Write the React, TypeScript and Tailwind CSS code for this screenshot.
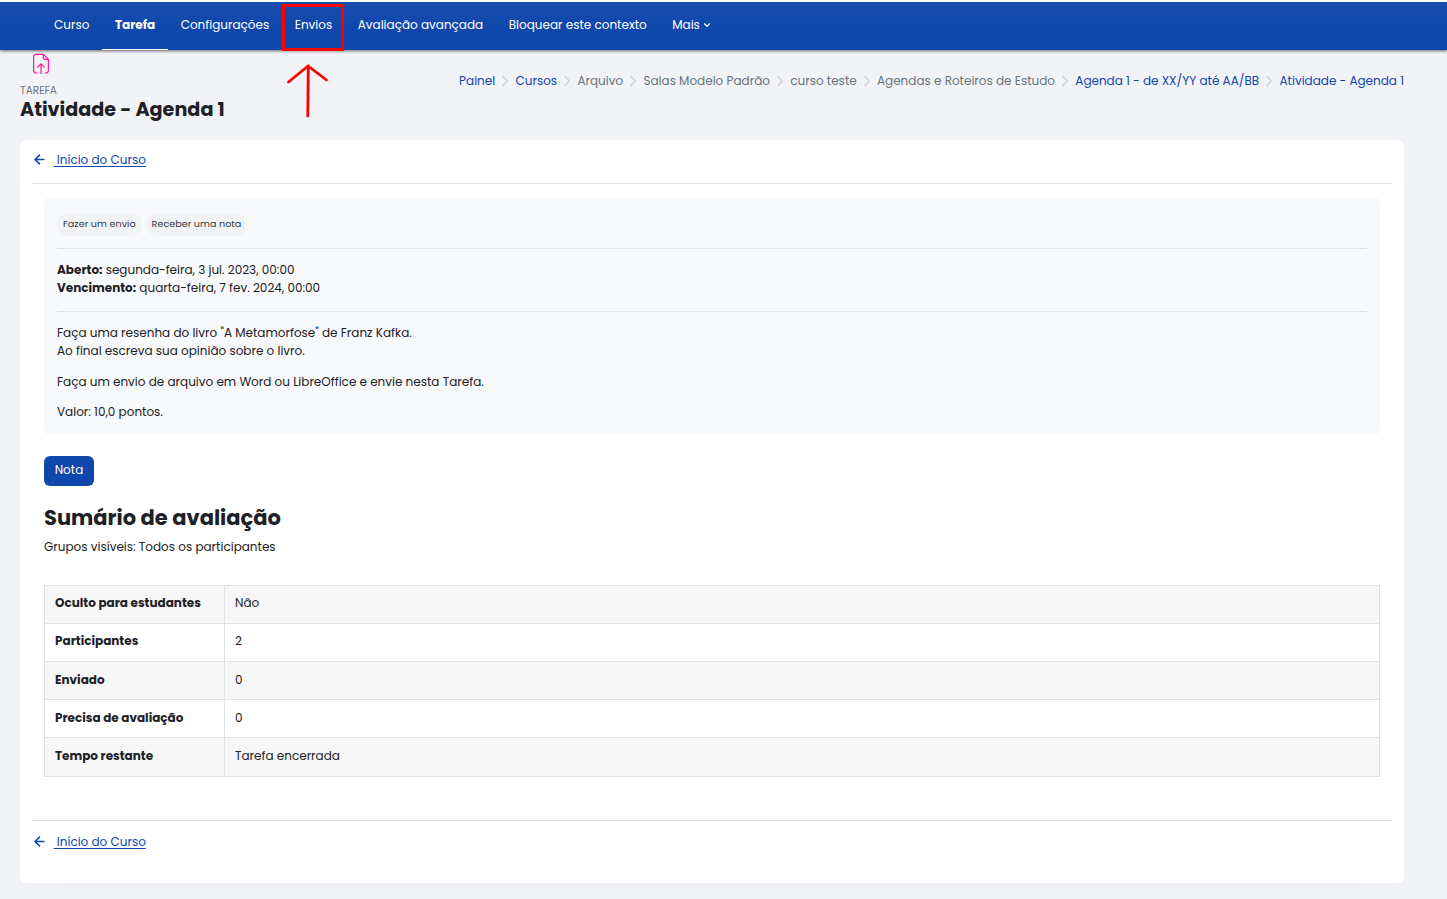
import { Fragment } from 'react';
import { ArrowLeft, ChevronDown } from 'lucide-react';
import clsx from 'clsx';

const navItems = [
  { label: 'Curso' },
  { label: 'Tarefa', active: true },
  { label: 'Configurações' },
  { label: 'Envios', marked: true },
  { label: 'Avaliação avançada' },
  { label: 'Bloquear este contexto' },
];

const breadcrumbs = [
  { label: 'Painel', link: true },
  { label: 'Cursos', link: true },
  { label: 'Arquivo' },
  { label: 'Salas Modelo Padrão' },
  { label: 'curso teste' },
  { label: 'Agendas e Roteiros de Estudo' },
  { label: 'Agenda 1 - de XX/YY até AA/BB', link: true },
  { label: 'Atividade - Agenda 1', link: true },
];

const summary = [
  { label: 'Oculto para estudantes', value: 'Não' },
  { label: 'Participantes', value: '2' },
  { label: 'Enviado', value: '0' },
  { label: 'Precisa de avaliação', value: '0' },
  { label: 'Tempo restante', value: 'Tarefa encerrada' },
];

function AssignIcon() {
  return (
    <svg className="ml-3 h-[22px] w-[18px]" viewBox="0 0 18 22" fill="none" stroke="#ff1a9c" strokeWidth="1.2">
      <path d="M5.5 20H4.5C2.6 20 1.6 19 1.6 17.2V4.2C1.6 2.3 2.6 1.4 4.5 1.4H11.3L16.4 6.3V17.2C16.4 19 15.4 20 13.5 20H12.5" />
      <path d="M11.3 1.4V4.9Q11.3 6.3 12.7 6.3H16.4" />
      <path d="M9 21V11M5.3 14.4L9 10.8L12.7 14.4" />
    </svg>
  );
}

// Red annotation that points at the highlighted tab
function PointerArrow() {
  return (
    <svg
      className="absolute left-[4px] top-[60px] h-[56px] w-[42px] overflow-visible"
      viewBox="0 0 42 56"
      fill="none"
      stroke="#ff0000"
      strokeWidth="2.8"
      strokeLinecap="round"
      strokeLinejoin="round"
    >
      <path d="M21.8 54L22.3 4M2.5 20L22.1 4L40.5 18" />
    </svg>
  );
}

function BackLink() {
  return (
    <a className="flex items-center text-[#0f47ad]">
      <ArrowLeft className="mb-[2px] mr-[6.6px] h-[15px] w-[15px]" strokeWidth={2.5} />
      <span className="underline underline-offset-2">&nbsp;Início do Curso</span>
    </a>
  );
}

export default function App() {
  return (
    <div className="flex h-[899px] w-full flex-col overflow-hidden bg-[#f1f3f7] font-['Poppins','Inter',sans-serif] text-[12px] leading-[18px] text-[#1d2125]">
      {/* Navigation */}
      <nav className="relative flex h-[50px] shrink-0 border-t-2 border-white bg-gradient-to-b from-[#174cac] to-[#0f47ad] to-60% pl-[41.3px] text-white shadow-[0_1px_3px_rgba(0,0,0,0.6)]">
        {navItems.map(item => (
          <div
            key={item.label}
            className={clsx(
              'relative flex h-full items-start whitespace-nowrap px-[12.75px] pt-[14px]',
              item.active && 'border-b border-white font-bold',
            )}
          >
            {item.label}
            {item.marked && (
              <>
                <div className="absolute left-0 top-[2px] h-[47px] w-[62px] border-[3px] border-[#ff0000]" />
                <PointerArrow />
              </>
            )}
          </div>
        ))}
        <div className="flex items-start px-[12.75px] pt-[14px]">
          <span>Mais</span>
          <ChevronDown className="ml-[2px] mt-[4px] h-[10px] w-[10px]" strokeWidth={2.6} />
        </div>
      </nav>

      {/* Page header */}
      <header className="flex h-[90px] shrink-0 items-start justify-between pl-[20px] pr-[43px]">
        <div className="pt-[3px]">
          <AssignIcon />
          <div className="mb-px mt-[9px] text-[10.5px] leading-[13px] text-[#6a737b]">TAREFA</div>
          <h1 className="text-[19.2px] font-bold leading-[24px]">Atividade - Agenda 1</h1>
        </div>
        <ol className="flex items-center whitespace-nowrap pt-[22px] text-[#6a737b]">
          {breadcrumbs.map((crumb, i) => (
            <Fragment key={crumb.label}>
              {i > 0 && (
                <svg className="mx-[7.15px] h-[12px] w-[6px]" viewBox="0 0 6 12" fill="none" stroke="#cfd3d9" strokeWidth="1.5">
                  <path d="M0.7 1L5.2 6L0.7 11" />
                </svg>
              )}
              <li className={clsx(crumb.link && 'text-[#0f47ad]')}>{crumb.label}</li>
            </Fragment>
          ))}
        </ol>
      </header>

      {/* Content */}
      <main className="ml-[20px] flex h-[743px] w-[1384px] shrink-0 flex-col rounded-[6px] bg-white px-3 shadow-[0_16px_32px_-16px_rgba(20,20,50,0.04)]">
        <div className="h-[44px] shrink-0 border-b border-[#dee2e6] pt-[11px]">
          <BackLink />
        </div>

        <div className="flex h-[636px] shrink-0 flex-col px-3 pt-[13px]">
          <section className="h-[238px] rounded-[6px] bg-[#f8f9fb] px-[13px] pt-[16px]">
            <div className="flex gap-[4px] text-[9.65px] leading-[14px] text-[#343a40]">
              <span className="h-[23px] rounded-full bg-[#f2f3f5] px-[6px] pt-[4px]">Fazer um envio</span>
              <span className="h-[23px] rounded-full bg-[#f2f3f5] px-[6px] pt-[4px]">Receber uma nota</span>
            </div>
            <div className="mt-[12px] border-y border-[#dee2e6] pb-[14px] pt-[12px]">
              <p>
                <strong>Aberto:</strong> segunda-feira, 3 jul. 2023, 00:00
              </p>
              <p>
                <strong>Vencimento:</strong> quarta-feira, 7 fev. 2024, 00:00
              </p>
            </div>
            <p className="mt-[12px]">Faça uma resenha do livro "A Metamorfose" de Franz Kafka.</p>
            <p>Ao final escreva sua opinião sobre o livro.</p>
            <p className="mt-[13px]">Faça um envio de arquivo em Word ou LibreOffice e envie nesta Tarefa.</p>
            <p className="mt-[12px]">Valor: 10,0 pontos.</p>
          </section>

          <button className="mt-[21px] h-[30px] w-[50px] shrink-0 rounded-[6px] bg-[#0f47ad] pb-[2px] text-white">
            Nota
          </button>

          <h2 className="mt-[18px] text-[21px] font-bold leading-[28px]">Sumário de avaliação</h2>
          <p className="mt-[6px]">Grupos visíveis: Todos os participantes</p>

          <div className="mt-[29px] border-x border-b border-[#dee2e6]">
            {summary.map(row => (
              <div
                key={row.label}
                className="flex h-[38.1px] border-t border-[#dee2e6] last:h-[38.6px] odd:bg-[#f7f7f7]"
              >
                <div className="w-[180px] border-r border-[#dee2e6] pl-[10px] pt-[8.4px] font-bold">{row.label}</div>
                <div className="pl-[10px] pt-[8.4px]">{row.value}</div>
              </div>
            ))}
          </div>
        </div>

        <div className="border-t border-[#dee2e6] pt-[12px]">
          <BackLink />
        </div>
      </main>
    </div>
  );
}
